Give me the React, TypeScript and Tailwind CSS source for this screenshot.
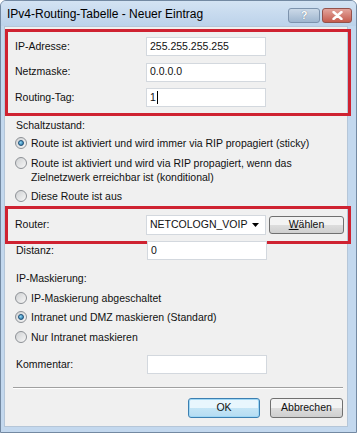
import type { ReactNode } from "react";

const labelCls = "w-[131px] shrink-0";
const inputCls =
  "w-[120px] h-[19px] shrink-0 bg-white border border-[#d3d8de] pl-[3px] flex items-center";

function Radio({ checked }: { checked?: boolean }) {
  return (
    <span className="w-[12px] h-[12px] mt-[1px] shrink-0 rounded-full border border-[#8d9196] bg-[linear-gradient(135deg,#cfd1d3,#f7f7f7)] flex items-center justify-center">
      {checked && (
        <span className="w-[6px] h-[6px] rounded-full border border-[#1d4f78] bg-[radial-gradient(circle_at_35%_35%,#8fd8f6,#1f6a9c)]" />
      )}
    </span>
  );
}

function Option({ checked, children }: { checked?: boolean; children: ReactNode }) {
  return (
    <div className="flex items-start gap-[4px] pl-[10px] leading-[14px]">
      <Radio checked={checked} />
      <span>{children}</span>
    </div>
  );
}

function Field({ label, children, inset }: { label: string; children: ReactNode; inset?: boolean }) {
  return (
    <div className={inset ? "flex items-center pl-[7px]" : "flex items-center pl-[11px]"}>
      <span className={labelCls}>{label}</span>
      {children}
    </div>
  );
}

export default function App() {
  return (
    <div className="w-[357px] h-[433px] flex flex-col bg-[#c3d8ee] border border-[#7389a2] rounded-t-[6px] overflow-hidden font-['Liberation_Sans',Arial,sans-serif] text-[10.5px] text-[#111]">
      {/* Title bar */}
      <div className="h-[25px] shrink-0 flex items-center pl-[6px] pr-[4px] bg-[linear-gradient(#d3e3f3,#bcd2ea)]">
        <span className="text-[12px] text-black flex-1 pt-[1px]">IPv4-Routing-Tabelle - Neuer Eintrag</span>
        <div className="flex gap-[2px] mt-[4px]">
          <div className="w-[32px] h-[15px] rounded-[3px] border border-[#7d93ad] bg-[linear-gradient(#cbd9e8,#9fb6cf)] flex items-center justify-center text-[11px] font-bold text-white [text-shadow:0_0_1px_#4a5f78]">
            ?
          </div>
          <div className="w-[30px] h-[15px] rounded-[3px] border border-[#94524b] bg-[linear-gradient(#e3a49c,#c55b4d)] flex items-center justify-center">
            <svg width="11" height="9" viewBox="0 0 11 9">
              <path d="M1.5 1 L9.5 8 M9.5 1 L1.5 8" stroke="#fff" strokeWidth="2.4" strokeLinecap="round" />
            </svg>
          </div>
        </div>
      </div>

      {/* Frame around client area */}
      <div className="flex-1 flex pl-[3px] pr-[8px] pb-[5px]">
        <div className="flex-1 flex flex-col bg-[#f0f0f0] border border-[#b5c6d8]">
          {/* Address box */}
          <div className="mt-[2px] ml-[0px] mr-[-4px] h-[87px] border-[3px] border-[#cf2231] flex flex-col pt-[5px] gap-[6.5px] relative z-10">
            <Field label="IP-Adresse:" inset>
              <div className={inputCls}>255.255.255.255</div>
            </Field>
            <Field label="Netzmaske:" inset>
              <div className={inputCls}>0.0.0.0</div>
            </Field>
            <Field label="Routing-Tag:" inset>
              <div className={inputCls}>
                1<span className="w-[1px] h-[13px] bg-black ml-[1px]" />
              </div>
            </Field>
          </div>

          <div className="mt-[2px] pl-[11px] leading-[14px]">Schaltzustand:</div>
          <div className="mt-[4px]">
            <Option checked>Route ist aktiviert und wird immer via RIP propagiert (sticky)</Option>
          </div>
          <div className="mt-[6px]">
            <Option>
              Route ist aktiviert und wird via RIP propagiert, wenn das
              <br />
              Zielnetzwerk erreichbar ist (konditional)
            </Option>
          </div>
          <div className="mt-[5px]">
            <Option>Diese Route ist aus</Option>
          </div>

          {/* Router box */}
          <div className="mt-[3px] mr-[-4px] h-[38px] border-[3px] border-[#cf2231] flex items-center pl-[7px] relative z-10">
            <span className={labelCls}>Router:</span>
            <div className="w-[120px] h-[20px] shrink-0 bg-white border border-[#d3d8de] pl-[3px] pr-[6px] flex items-center justify-between">
              <span>NETCOLOGN_VOIP</span>
              <svg width="7" height="4" viewBox="0 0 7 4">
                <polygon points="0,0 7,0 3.5,4" fill="#000" />
              </svg>
            </div>
            <div className="ml-[3px] w-[75px] h-[18px] rounded-[3px] border border-[#707070] bg-[linear-gradient(#f3f3f3_50%,#dddddd_50%,#cfcfcf)] flex items-center justify-center">
              <span>
                <span className="underline">W</span>ählen
              </span>
            </div>
          </div>

          <div className="mt-[-3px] relative z-20">
            <Field label="Distanz:">
              <div className={inputCls}>0</div>
            </Field>
          </div>

          <div className="mt-[11px] pl-[11px] leading-[14px]">IP-Maskierung:</div>
          <div className="mt-[6px]">
            <Option>IP-Maskierung abgeschaltet</Option>
          </div>
          <div className="mt-[5px]">
            <Option checked>Intranet und DMZ maskieren (Standard)</Option>
          </div>
          <div className="mt-[6px]">
            <Option>Nur Intranet maskieren</Option>
          </div>

          <div className="mt-[11px]">
            <Field label="Kommentar:">
              <div className={inputCls} />
            </Field>
          </div>

          <div className="mt-[13px] ml-[8px] mr-[4px] border-t border-[#a0a0a0] border-b border-b-white" />

          <div className="mt-[9px] flex justify-end gap-[10px] pr-[4px]">
            <div className="w-[72px] h-[20px] rounded-[3px] border border-[#3c7fb1] bg-[linear-gradient(#e8f6fd_50%,#c4e5f6_50%,#b6dcf2)] shadow-[inset_0_0_0_1px_#9fd7f5] flex items-center justify-center">
              OK
            </div>
            <div className="w-[73px] h-[20px] rounded-[3px] border border-[#707070] bg-[linear-gradient(#f3f3f3_50%,#dddddd_50%,#cfcfcf)] flex items-center justify-center">
              Abbrechen
            </div>
          </div>
        </div>
      </div>
    </div>
  );
}
